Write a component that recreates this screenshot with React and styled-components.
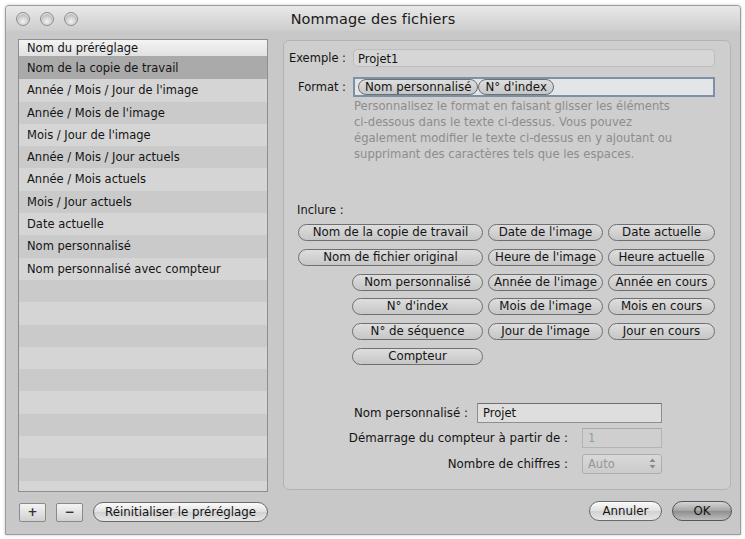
import React from 'react';
import styled, { createGlobalStyle } from 'styled-components';

const GlobalStyle = createGlobalStyle`
  html, body {
    margin: 0;
    padding: 0;
    background: #ffffff;
  }
  body {
    font-family: "DejaVu Sans", "Liberation Sans", sans-serif;
    font-size: 11.5px;
    color: #141414;
  }
`;

const presets = [
  'Nom de la copie de travail',
  'Année / Mois / Jour de l\'image',
  'Année / Mois de l\'image',
  'Mois / Jour de l\'image',
  'Année / Mois / Jour actuels',
  'Année / Mois actuels',
  'Mois / Jour actuels',
  'Date actuelle',
  'Nom personnalisé',
  'Nom personnalisé avec compteur',
];

const tokens = [
  ['Nom de la copie de travail', 'Date de l\'image', 'Date actuelle'],
  ['Nom de fichier original', 'Heure de l\'image', 'Heure actuelle'],
  ['Nom personnalisé', 'Année de l\'image', 'Année en cours'],
  ['N° d\'index', 'Mois de l\'image', 'Mois en cours'],
  ['N° de séquence', 'Jour de l\'image', 'Jour en cours'],
  ['Compteur', null, null],
];

function App() {
  const emptyRows = Array.from({ length: 10 });

  return (
    <>
      <GlobalStyle />
      <Window>
        <TitleBar>
          <Lights>
            <Light />
            <Light />
            <Light />
          </Lights>
          <Title>Nommage des fichiers</Title>
          <span />
        </TitleBar>

        <Body>
          <LeftColumn>
            <List>
              <ListHeader>Nom du préréglage</ListHeader>
              {presets.map((name, i) => (
                <ListRow key={name} $odd={i % 2 === 1} $selected={i === 0}>
                  {name}
                </ListRow>
              ))}
              {emptyRows.map((_, i) => (
                <ListRow key={i} $odd={(presets.length + i) % 2 === 1} />
              ))}
            </List>
            <Toolbar>
              <SquareButton>+</SquareButton>
              <SquareButton>−</SquareButton>
              <PillButton $width={175}>Réinitialiser le préréglage</PillButton>
            </Toolbar>
          </LeftColumn>

          <RightColumn>
            <Panel>
              <FieldRow>
                <RowLabel>Exemple :</RowLabel>
                <ExampleField>Projet1</ExampleField>
              </FieldRow>
              <FieldRow $top={10}>
                <RowLabel>Format :</RowLabel>
                <FormatField>
                  <Token $inline>Nom personnalisé</Token>
                  <Token $inline>N° d'index</Token>
                </FormatField>
              </FieldRow>
              <Help>
                Personnalisez le format en faisant glisser les éléments
                <br />
                ci-dessous dans le texte ci-dessus. Vous pouvez
                <br />
                également modifier le texte ci-dessus en y ajoutant ou
                <br />
                supprimant des caractères tels que les espaces.
              </Help>

              <IncludeLabel>Inclure :</IncludeLabel>
              <TokenGrid>
                {tokens.map((row, r) =>
                  row.map((label, c) =>
                    label ? (
                      <Token key={`${r}-${c}`} $indent={c === 0 && r > 1}>
                        {label}
                      </Token>
                    ) : (
                      <span key={`${r}-${c}`} />
                    )
                  )
                )}
              </TokenGrid>

              <Form>
                <FormRow $gap={9}>
                  <FormLabel>Nom personnalisé :</FormLabel>
                  <TextInput $width={185}>Projet</TextInput>
                </FormRow>
                <FormRow $gap={14}>
                  <FormLabel>Démarrage du compteur à partir de :</FormLabel>
                  <TextInput $width={80} $disabled>1</TextInput>
                </FormRow>
                <FormRow $gap={14}>
                  <FormLabel>Nombre de chiffres :</FormLabel>
                  <PopUp>
                    Auto
                    <svg width="7" height="11" viewBox="0 0 7 11">
                      <path d="M3.5 0.5 L6.5 4 H0.5 Z" fill="#8a8a8a" />
                      <path d="M3.5 10.5 L6.5 7 H0.5 Z" fill="#8a8a8a" />
                    </svg>
                  </PopUp>
                </FormRow>
              </Form>
            </Panel>

            <Footer>
              <PillButton $width={73}>Annuler</PillButton>
              <DefaultButton>OK</DefaultButton>
            </Footer>
          </RightColumn>
        </Body>
      </Window>
    </>
  );
}

const Window = styled.div`
  margin: 5px;
  width: 734px;
  height: 528px;
  border: 1px solid #9c9c9c;
  border-radius: 4px 4px 0 0;
  background: #c8c8c8;
  display: flex;
  flex-direction: column;
  overflow: hidden;
  box-shadow: 0 0 3px rgba(0, 0, 0, 0.25);
`;

const TitleBar = styled.div`
  height: 24px;
  display: grid;
  grid-template-columns: 1fr auto 1fr;
  align-items: center;
  padding: 1px 10px 0;
  background: linear-gradient(#e9e9e9, #cdcdcd);
`;

const Lights = styled.div`
  display: flex;
  gap: 10px;
`;

const Light = styled.span`
  width: 12px;
  height: 12px;
  border-radius: 50%;
  border: 1px solid #8d8d8d;
  background: radial-gradient(circle at 50% 70%, #f4f4f4 0%, #c6c6c6 55%, #9d9d9d 100%);
  box-shadow: inset 0 1px 1px rgba(255, 255, 255, 0.8);
`;

const Title = styled.div`
  font-size: 14.5px;
  color: #1a1a1a;
  letter-spacing: 0.1px;
`;

const Body = styled.div`
  flex: 1;
  display: flex;
  gap: 15px;
  padding: 8px 8px 0 12px;
`;

const LeftColumn = styled.div`
  width: 250px;
  display: flex;
  flex-direction: column;
`;

const List = styled.div`
  height: 451px;
  border: 1px solid #8e8e8e;
  overflow: hidden;
  background: #cacaca;
`;

const ListHeader = styled.div`
  height: 16px;
  line-height: 16px;
  padding-left: 8px;
  background: linear-gradient(#f3f3f3, #e1e1e1);
  border-bottom: 1px solid #a9a9a9;
`;

const ListRow = styled.div`
  height: 22.3px;
  line-height: 22.3px;
  padding-left: 8px;
  white-space: nowrap;
  background: ${(p) => (p.$selected ? '#aaaaaa' : p.$odd ? '#d5d5d5' : '#cacaca')};
`;

const Toolbar = styled.div`
  margin-top: 10px;
  display: flex;
  align-items: center;
  gap: 10px;
  padding-left: 1px;
`;

const SquareButton = styled.button`
  width: 27px;
  height: 19px;
  padding: 0;
  border: 1px solid #8a8a8a;
  border-radius: 2px;
  background: linear-gradient(#f4f4f4, #d0d0d0);
  font-family: inherit;
  font-size: 12px;
  font-weight: bold;
  color: #333;
  line-height: 15px;
`;

const PillButton = styled.button`
  width: ${(p) => p.$width}px;
  height: 20px;
  padding: 0;
  border: 1px solid #6a6a6a;
  border-radius: 10px;
  background: linear-gradient(#fbfbfb, #e0e0e0 50%, #d2d2d2 51%, #e6e6e6);
  font-family: inherit;
  font-size: 11.8px;
  color: #141414;
  line-height: 17px;
`;

const DefaultButton = styled(PillButton)`
  width: 60px;
  border-color: #555;
  background: linear-gradient(#d6d6d6, #a3a3a3 50%, #8e8e8e 51%, #bdbdbd);
`;

const RightColumn = styled.div`
  width: 448px;
  display: flex;
  flex-direction: column;
`;

const Panel = styled.div`
  margin-top: 1px;
  height: 450px;
  box-sizing: border-box;
  border: 1px solid #b3b3b3;
  border-radius: 6px;
  background: #cecece;
  padding: 8px 15px 0 2px;
  display: flex;
  flex-direction: column;
`;

const FieldRow = styled.div`
  display: flex;
  align-items: center;
  gap: 7px;
  margin-top: ${(p) => p.$top || 0}px;
`;

const RowLabel = styled.div`
  width: 60px;
  text-align: right;
  white-space: nowrap;
`;

const ExampleField = styled.div`
  flex: 1;
  height: 18px;
  line-height: 18px;
  box-sizing: border-box;
  padding-left: 4px;
  border: 1px solid #bdbdbd;
  border-radius: 4px;
  background: #d6d6d6;
`;

const FormatField = styled.div`
  flex: 1;
  height: 20px;
  box-sizing: border-box;
  padding: 1px 3px;
  border: 2px solid #7c90a6;
  background: #e3e5e8;
  display: flex;
  align-items: center;
`;

const Help = styled.div`
  margin: 1px 0 0 68px;
  line-height: 16px;
  font-size: 11.6px;
  color: #8d8d8d;
  white-space: nowrap;
`;

const IncludeLabel = styled.div`
  margin: 40px 0 0 11px;
  line-height: 16px;
`;

const TokenGrid = styled.div`
  margin: 6px 0 0 12px;
  display: grid;
  grid-template-columns: 185px 115px 107px;
  grid-auto-rows: 17px;
  column-gap: 5px;
  row-gap: 7.8px;
`;

const Token = styled.div`
  box-sizing: border-box;
  height: ${(p) => (p.$inline ? '16px' : '17px')};
  margin-left: ${(p) => (p.$indent ? '54px' : '0')};
  padding: ${(p) => (p.$inline ? '0 6px' : '0')};
  border: 1px solid #6f6f6f;
  border-radius: 9px;
  background: linear-gradient(#dedede, #c6c6c6);
  text-align: center;
  font-size: 11.8px;
  line-height: 15px;
  white-space: nowrap;
  color: #141414;
`;

const Form = styled.div`
  margin-top: 38px;
  padding-right: 53px;
  display: flex;
  flex-direction: column;
  gap: 5.5px;
`;

const FormRow = styled.div`
  display: flex;
  justify-content: flex-end;
  align-items: center;
  gap: ${(p) => p.$gap}px;
`;

const FormLabel = styled.div`
  white-space: nowrap;
  font-size: 11.8px;
`;

const TextInput = styled.div`
  width: ${(p) => p.$width}px;
  height: 20px;
  box-sizing: border-box;
  padding-left: 5px;
  line-height: 18px;
  border: 1px solid ${(p) => (p.$disabled ? '#b4b4b4' : '#8f8f8f')};
  border-top-color: ${(p) => (p.$disabled ? '#a8a8a8' : '#6f6f6f')};
  background: ${(p) => (p.$disabled ? '#cfcfcf' : '#dedede')};
  color: ${(p) => (p.$disabled ? '#9a9a9a' : '#141414')};
`;

const PopUp = styled.div`
  width: 80px;
  height: 20px;
  box-sizing: border-box;
  padding: 0 5px;
  border: 1px solid #adadad;
  border-radius: 3px;
  background: linear-gradient(#d9d9d9, #cbcbcb);
  color: #969696;
  display: flex;
  align-items: center;
  justify-content: space-between;
`;

const Footer = styled.div`
  margin-top: 11px;
  display: flex;
  justify-content: flex-end;
  gap: 10px;
  margin-right: -1px;
`;

export default App;
